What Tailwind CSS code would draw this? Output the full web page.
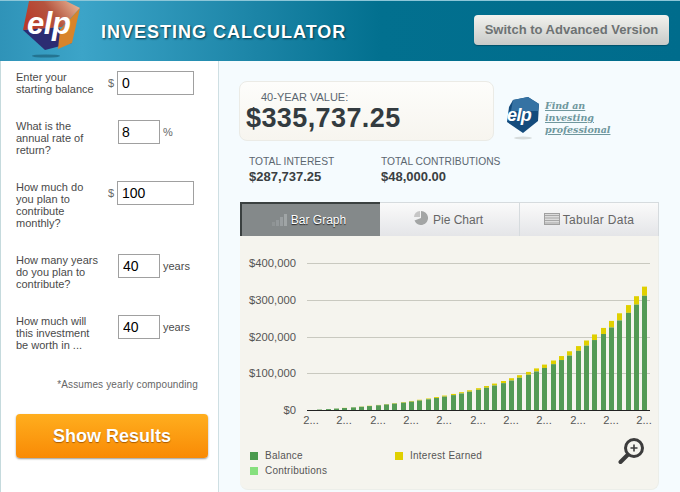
<!DOCTYPE html>
<html lang="en">
<head>
    <meta charset="UTF-8">
    <title>Investing Calculator</title>
    <script src="https://cdn.jsdelivr.net/npm/@tailwindcss/browser@4"></script>
</head>
<body class="bg-white font-['Liberation_Sans',Arial,sans-serif]">
<div class="w-[680px] h-[492px] overflow-hidden flex flex-col">
    <!-- Header -->
    <header class="h-[61px] shrink-0 flex items-start border-t border-t-[#8cc6d8] bg-[linear-gradient(90deg,#2f93b8_0%,#3ca4c8_12%,#1b84a6_38%,#02708f_56%,#006c8c_100%)]">
        <svg class="w-[62px] h-[60px] ml-[21px] shrink-0" viewBox="21 1 62 60">
            <defs>
                <linearGradient id="logoTop" x1="0" y1="0.6" x2="1" y2="0.2">
                    <stop offset="0" stop-color="#b93a2a"/>
                    <stop offset=".5" stop-color="#b4553f"/>
                    <stop offset="1" stop-color="#e8b394"/>
                </linearGradient>
            </defs>
            <ellipse cx="46" cy="56" rx="14" ry="1.6" fill="#1d627c" opacity=".7"/>
            <polygon points="23,30 58,27 72,43 45,50" fill="#2c2c72"/>
            <polygon points="29,1 66,1 80,8 62,27 23,30" fill="url(#logoTop)"/>
            <polygon points="80,8 72,43 58,49 60,30" fill="#d8842a"/>
            <text x="27" y="34" font-size="31" font-weight="700" font-style="italic" fill="#fff" letter-spacing="-.4" font-family="Liberation Sans">elp</text>
        </svg>
        <h1 class="ml-[18px] mt-[21px] text-[18px] leading-[20px] font-bold tracking-[1px] text-white [text-shadow:1px_1px_2px_#00384a]">INVESTING CALCULATOR</h1>
        <button class="ml-auto mr-[11px] mt-[14px] w-[195px] h-[30px] rounded-[4px] bg-[linear-gradient(180deg,#f2f2ee,#c8cac8)] text-[13px] font-bold text-[#6d7273] shadow-[0_1px_1px_#00506a]">Switch to Advanced Version</button>
    </header>

    <div class="flex-1 flex min-h-0">
        <!-- Left form -->
        <aside class="w-[219px] shrink-0 border-l border-l-[#c5dadd] border-r border-r-[#cfdfe3] pl-[15px] text-[11px] leading-[12px] text-[#4a4a4a]">
            <div class="flex mt-[10px] h-[24px]">
                <p class="w-[92px]">Enter your<br>starting balance</p>
                <span class="w-[8px] mt-[6px] text-[#666]">$</span>
                <input value="0" class="w-[77px] h-[24px] ml-[1px] border border-[#a0a0a0] bg-white px-[4px] text-[14px] text-black outline-none">
            </div>
            <div class="flex mt-[25px] h-[24px]">
                <p class="w-[102px]">What is the<br>annual rate of<br>return?</p>
                <input value="8" class="w-[42px] h-[24px] border border-[#a0a0a0] bg-white px-[3px] text-[14px] text-black outline-none">
                <span class="ml-[3px] mt-[6px] text-[#666]">%</span>
            </div>
            <div class="flex mt-[37px] h-[24px]">
                <p class="w-[92px]">How much do<br>you plan to<br>contribute<br>monthly?</p>
                <span class="w-[8px] mt-[6px] text-[#666]">$</span>
                <input value="100" class="w-[77px] h-[24px] ml-[1px] border border-[#a0a0a0] bg-white px-[4px] text-[14px] text-black outline-none">
            </div>
            <div class="flex mt-[49px] h-[24px]">
                <p class="w-[102px]">How many years<br>do you plan to<br>contribute?</p>
                <input value="40" class="w-[42px] h-[24px] border border-[#a0a0a0] bg-white px-[4px] text-[14px] text-black outline-none">
                <span class="ml-[3px] mt-[6px]">years</span>
            </div>
            <div class="flex mt-[37px] h-[24px]">
                <p class="w-[102px]">How much will<br>this investment<br>be worth in ...</p>
                <input value="40" class="w-[42px] h-[24px] border border-[#a0a0a0] bg-white px-[4px] text-[14px] text-black outline-none">
                <span class="ml-[3px] mt-[6px]">years</span>
            </div>
            <p class="mt-[40px] w-[182px] text-right text-[10px] text-[#666] tracking-[0.13px]">*Assumes yearly compounding</p>
            <button class="block mt-[23px] w-[192px] h-[44px] rounded-[4px] bg-[linear-gradient(180deg,#ffae1e,#f98a05)] text-[18px] font-bold text-white [text-shadow:0_1px_1px_#a85a00] shadow-[0_1px_2px_#999]">Show Results</button>
        </aside>

        <!-- Right results -->
        <main class="flex-1 bg-[#f5fbfe] pl-[20px] pr-[21px] relative">
            <div class="flex mt-[20px] items-start">
                <div class="w-[255px] h-[60px] rounded-[8px] border border-[#ebebe6] bg-[linear-gradient(180deg,#fdfdfb,#f7f5ef)] pl-[6px]">
                    <p class="ml-[15px] mt-[9px] text-[11px] leading-[12px] text-[#5b6670]">40-YEAR VALUE:</p>
                    <p class="mt-[1px] text-[27px] leading-[28px] font-bold text-[#333b40] tracking-[0.4px]">$335,737.25</p>
                </div>
                <svg class="ml-[12px] mt-[16px] w-[36px] h-[44px] shrink-0" viewBox="0 0 36 44">
                    <ellipse cx="17" cy="41" rx="9" ry="1.5" fill="#d7dcdc"/>
                    <polygon points="7,3 22,0 33,7 32,24 17,36 1,25 3,10" fill="#144b7c"/>
                    <polygon points="7,3 22,0 33,7 32,14 5,14" fill="#3572a3"/>
                    <text x="1" y="24" font-size="18" font-weight="700" font-style="italic" fill="#fff" letter-spacing="-.6" font-family="Liberation Sans">elp</text>
                </svg>
                <a href="#" class="ml-[3px] mt-[19px] font-['DejaVu_Serif',serif] text-[9.5px] leading-[12px] font-bold italic underline text-[#6f979d]">Find an<br>investing<br>professional</a>
            </div>
            <div class="flex mt-[15px] ml-[10px] text-[10.25px] leading-[12px] text-[#5b6670]">
                <div class="w-[132px]">
                    <p>TOTAL INTEREST</p>
                    <p class="mt-[2px] text-[13px] leading-[14px] font-bold text-[#3a3f42]">$287,737.25</p>
                </div>
                <div>
                    <p>TOTAL CONTRIBUTIONS</p>
                    <p class="mt-[2px] text-[13px] leading-[14px] font-bold text-[#3a3f42]">$48,000.00</p>
                </div>
            </div>

            <!-- Tabs -->
            <div class="flex ml-[1px] mt-[18px] w-[419px] h-[34px] text-[12px]">
                <div class="w-[140px] flex items-center justify-center gap-[3px] pr-[4px] bg-[#84898a] border-t-2 border-l-2 border-t-[#3a4040] border-l-[#3a4040] text-white [text-shadow:0_1px_1px_#222]">
                    <svg class="w-[16px] h-[12px]" viewBox="0 0 16 12"><rect x="0" y="8" width="3" height="4" fill="#8f9495"/><rect x="4" y="6" width="3" height="6" fill="#93989a"/><rect x="8" y="3" width="3" height="9" fill="#9a9fa1"/><rect x="12" y="0" width="3" height="12" fill="#a0a5a6"/></svg>
                    <span>Bar Graph</span>
                </div>
                <div class="w-[140px] flex items-center justify-center gap-[5px] pr-[2px] border-t border-r border-[#d6dbde] bg-[linear-gradient(180deg,#fafafa,#e4e5e8)] text-[#666]">
                    <svg class="w-[14px] h-[14px] -mt-[3px]" viewBox="0 0 14 14"><path d="M7 7 L7 0 A7 7 0 1 1 0.5 9.5 Z" fill="#a3a5a5"/><path d="M6 6 L6 0 A6 6 0 0 0 0 6 Z" fill="#c6c6c6"/></svg>
                    <span>Pie Chart</span>
                </div>
                <div class="flex-1 flex items-center justify-center gap-[3px] border-t border-r border-[#d6dbde] bg-[linear-gradient(180deg,#fafafa,#e4e5e8)] text-[#666] tracking-[0.3px]">
                    <svg class="w-[16px] h-[12px] -mt-[2px]" viewBox="0 0 16 12"><rect x=".5" y=".5" width="15" height="11" fill="#dcdcdc" stroke="#a0a0a0"/><path d="M1 2.5H15M1 5H15M1 7.5H15M1 10H15" stroke="#a8a8a8"/></svg>
                    <span>Tabular Data</span>
                </div>
            </div>

            <!-- Chart panel -->
            <section class="relative ml-[1px] w-[419px] h-[254px] bg-[#f5f4ee] rounded-b-[8px] border-b border-r border-[#eceee9]">
                <svg id="chart" class="block" width="419" height="190" viewBox="240 236 419 190" font-family="Liberation Sans" font-size="11.25" fill="#555"></svg>
                <div class="mt-[25px] ml-[10px] grid grid-cols-[145px_1fr] gap-y-[6px] text-[10px] leading-[9px] tracking-[0.25px] text-[#555]">
                    <div class="flex items-center gap-[7px]"><span class="w-[8px] h-[8px] bg-[#4a9a4e]"></span>Balance</div>
                    <div class="flex items-center gap-[7px]"><span class="w-[8px] h-[8px] bg-[#e0d000]"></span>Interest Earned</div>
                    <div class="flex items-center gap-[7px]"><span class="w-[8px] h-[8px] bg-[#86e07e]"></span>Contributions</div>
                </div>
                <svg class="absolute left-[378px] top-[201px] w-[28px] h-[28px]" viewBox="0 0 28 28">
                    <circle cx="16" cy="11" r="8.5" fill="none" stroke="#3c3c3c" stroke-width="3"/>
                    <path d="M9.5 18 L2.5 25" stroke="#3c3c3c" stroke-width="4" stroke-linecap="round"/>
                    <path d="M16 7.5V14.5M12.5 11H19.5" stroke="#3c3c3c" stroke-width="1.6"/>
                </svg>
            </section>
        </main>
    </div>
</div>
<script>
    // bars: yearly compounding at 8% with $100/month
    const svgNs = 'http://www.w3.org/2000/svg';
    const chart = document.getElementById('chart');
    const baseY = 410, perDollar = 36.75 / 100000;
    function add(tag, attrs, text) {
        const el = document.createElementNS(svgNs, tag);
        for (const k in attrs) el.setAttribute(k, attrs[k]);
        if (text) el.textContent = text;
        chart.appendChild(el);
    }
    ['$400,000', '$300,000', '$200,000', '$100,000', '$0'].forEach((label, i) => {
        const y = Math.round(baseY - (4 - i) * 36.75);
        if (i < 4) add('rect', { x: 307, y: y, width: 343, height: 1, fill: '#c9c9c0' });
        add('text', { x: 296, y: y + 4, 'text-anchor': 'end' }, label);
    });
    let total = 0;
    for (let i = 0; i <= 40; i++) {
        const x = Math.round(311 + i * 8.335) - 2;
        if (i > 0) {
            const green = total + 1200;
            const next = green * 1.08;
            const gTop = baseY - green * perDollar;
            const yTop = baseY - next * perDollar;
            add('rect', { x: x, y: yTop, width: 5, height: gTop - yTop, fill: '#e0d000' });
            add('rect', { x: x, y: gTop, width: 5, height: baseY - gTop, fill: '#539a55' });
            total = next;
        }
        if (i % 4 === 0) add('text', { x: x + 2, y: 424, 'text-anchor': 'middle' }, '2...');
    }
    add('rect', { x: 307, y: 410, width: 343, height: 1, fill: '#222' });
</script>
</body>
</html>
